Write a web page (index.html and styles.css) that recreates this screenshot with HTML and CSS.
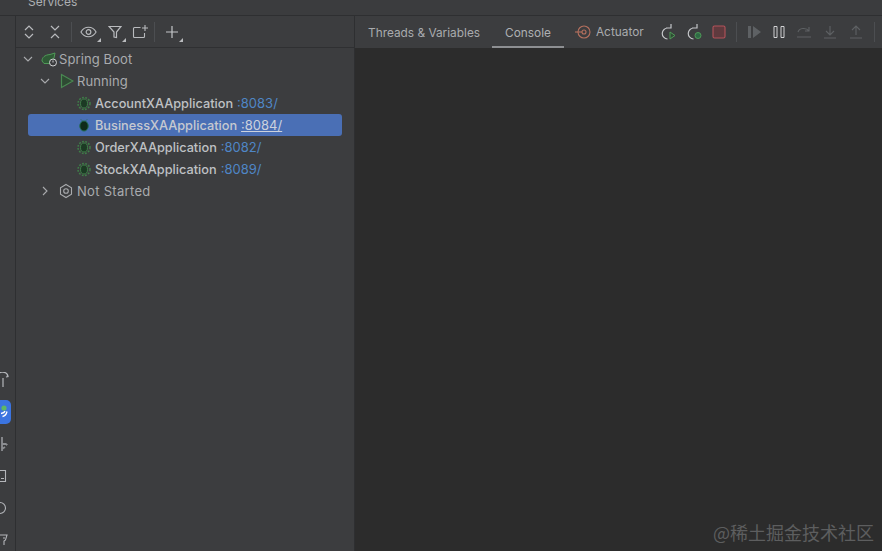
FILE: index.html
```html
<!DOCTYPE html>
<html lang="en">
<head>
<meta charset="utf-8">
<title>Services</title>
<link rel="stylesheet" href="styles.css">
</head>
<body>
<div class="app">
  <div class="titlebar"><span class="title">Services</span></div>
  <div class="main">
    <aside class="strip">
      <svg class="strip-icon" width="15" height="16" viewBox="0 0 15 16"><path d="M-3 5a5 4 0 0 1 11-1M7 2.500l1 2-2 .5M3 6v9" fill="none" stroke="#b4b6ba" stroke-width="1.200"/></svg>
      <div class="strip-active"><svg width="11" height="16" viewBox="0 0 11 16"><path d="M1 9.500c2-.3 3.500-1 4-2.500M2.500 12.500c2.500-.5 4-2.500 4.500-5" fill="none" stroke="#fff" stroke-width="1.300"/><circle cx="4" cy="4" r="2.600" fill="#5fb865"/></svg></div>
      <svg class="strip-icon" width="15" height="16" viewBox="0 0 15 16"><path d="M2 1v14M2 8h4M2 13l3-2" fill="none" stroke="#8c8e92" stroke-width="1.800"/><path d="M6 7l2 1.500L6 10z" fill="#8c8e92"/></svg>
      <svg class="strip-icon" width="15" height="16" viewBox="0 0 15 16"><path d="M-2 2.500h7.500v11H-2M1 10.500h3" fill="none" stroke="#b4b6ba" stroke-width="1.100"/></svg>
      <svg class="strip-icon" width="15" height="16" viewBox="0 0 15 16"><circle cx="0" cy="8" r="5.500" fill="none" stroke="#b4b6ba" stroke-width="1.100"/></svg>
      <svg class="strip-icon" width="15" height="16" viewBox="0 0 15 16"><path d="M-1 3h8l-1.500 5-1.500 1v4M3 6h2" fill="none" stroke="#b4b6ba" stroke-width="1.100"/></svg>
    </aside>
    <section class="side">
      <div class="toolbar">
        <svg class="tool" width="14" height="16" viewBox="0 0 14 16"><path d="M3 6l4-4 4 4M3 10l4 4 4-4" fill="none" stroke="#b9bbbe" stroke-width="1.200"/></svg>
        <svg class="tool tool-b" width="14" height="16" viewBox="0 0 14 16"><path d="M3 2l4 4 4-4M3 14l4-4 4 4" fill="none" stroke="#b9bbbe" stroke-width="1.200"/></svg>
        <span class="sep sep-a"></span>
        <span class="drop"><svg width="17" height="14" viewBox="0 0 18 14"><path d="M1 7c2-3.500 5-5 8-5s6 1.500 8 5c-2 3.500-5 5-8 5s-6-1.500-8-5z" fill="none" stroke="#b9bbbe" stroke-width="1.200"/><circle cx="9" cy="7" r="2.500" fill="none" stroke="#b9bbbe" stroke-width="1.200"/></svg><i class="corner"></i></span>
        <span class="drop drop-filter"><svg width="14" height="14" viewBox="0 0 14 14"><path d="M1 1.500h12L8.500 7v5.500L6 12V7z" fill="none" stroke="#b9bbbe" stroke-width="1.200"/></svg><i class="corner"></i></span>
        <svg class="tool tool-new" width="16" height="16" viewBox="0 0 16 16"><path d="M8.500 3.500H2.500a1 1 0 0 0-1 1v8a1 1 0 0 0 1 1h9a1 1 0 0 0 1-1V9M13 1v6M10 4h6" fill="none" stroke="#b9bbbe" stroke-width="1.100"/></svg>
        <span class="sep sep-b"></span>
        <span class="drop drop-plus"><svg width="14" height="14" viewBox="0 0 14 14"><path d="M7 1v12M1 7h12" fill="none" stroke="#c4c6c9" stroke-width="1.200"/></svg><i class="corner"></i></span>
      </div>
      <ul class="tree">
        <li class="row lvl0">
          <svg class="chev" width="10" height="10" viewBox="0 0 10 10"><path d="M1 3l4 4 4-4" fill="none" stroke="#a9abae" stroke-width="1.100"/></svg>
          <svg class="node boot" width="17" height="16" viewBox="0 0 17 16"><path d="M1 10c0-3.500 2.500-6 8-6.500l5-1.500-1 5-3 5.500H3z" fill="#2f5a36" stroke="#4f9a58" stroke-width="1"/><circle cx="12" cy="11.500" r="3.500" fill="#3c3d3f" stroke="#cfd0d2" stroke-width="1"/><path d="M12 9.500v2" stroke="#cfd0d2"/></svg>
          <span class="label dim">Spring Boot</span>
        </li>
        <li class="row lvl1">
          <svg class="chev" width="10" height="10" viewBox="0 0 10 10"><path d="M1 3l4 4 4-4" fill="none" stroke="#a9abae" stroke-width="1.100"/></svg>
          <svg class="node" width="14" height="16" viewBox="0 0 14 16"><path d="M1.500 1.500v13L13 8z" fill="#2e4a33" stroke="#4a8a52" stroke-width="1.200"/></svg>
          <span class="label dim">Running</span>
        </li>
        <li class="row lvl2">
          <svg class="bug" width="16" height="16" viewBox="0 0 16 16"><circle cx="8" cy="8.500" r="6" fill="none" stroke="#3f7f49" stroke-width="1.500" stroke-dasharray="1.800 1.400"/><ellipse cx="8" cy="8.500" rx="3.500" ry="4.500" fill="#1c3a24" stroke="#3f7f49"/></svg>
          <span class="label strong">AccountXAApplication</span><a class="port">:8083/</a>
        </li>
        <li class="row lvl2 selected">
          <svg class="bug" width="16" height="16" viewBox="0 0 16 16"><ellipse cx="8" cy="9" rx="4.200" ry="5" fill="#0f2b1a" stroke="#1f6a4a"/><path d="M6 3.500l-1-1M10 3.500l1-1" stroke="#1f6a4a"/></svg>
          <span class="label strong">BusinessXAApplication</span><a class="port current">:8084/</a>
        </li>
        <li class="row lvl2">
          <svg class="bug" width="16" height="16" viewBox="0 0 16 16"><circle cx="8" cy="8.500" r="6" fill="none" stroke="#3f7f49" stroke-width="1.500" stroke-dasharray="1.800 1.400"/><ellipse cx="8" cy="8.500" rx="3.500" ry="4.500" fill="#1c3a24" stroke="#3f7f49"/></svg>
          <span class="label strong">OrderXAApplication</span><a class="port">:8082/</a>
        </li>
        <li class="row lvl2">
          <svg class="bug" width="16" height="16" viewBox="0 0 16 16"><circle cx="8" cy="8.500" r="6" fill="none" stroke="#3f7f49" stroke-width="1.500" stroke-dasharray="1.800 1.400"/><ellipse cx="8" cy="8.500" rx="3.500" ry="4.500" fill="#1c3a24" stroke="#3f7f49"/></svg>
          <span class="label strong">StockXAApplication</span><a class="port">:8089/</a>
        </li>
        <li class="row lvl1">
          <svg class="chev" width="10" height="10" viewBox="0 0 10 10"><path d="M3 1l4 4-4 4" fill="none" stroke="#a9abae" stroke-width="1.100"/></svg>
          <svg class="node gear" width="14" height="16" viewBox="0 0 14 16"><path d="M7 1.500l5.500 3.200v6.600L7 14.500l-5.500-3.200V4.700z" fill="none" stroke="#a9abae" stroke-width="1.100"/><circle cx="7" cy="8" r="2.300" fill="none" stroke="#a9abae" stroke-width="1.100"/></svg>
          <span class="label dim wide">Not Started</span>
        </li>
      </ul>
    </section>
    <section class="content">
      <div class="tabs">
        <span class="tab">Threads &amp; Variables</span>
        <span class="tab active">Console</span>
        <span class="tab actuator"><svg width="16" height="16" viewBox="0 0 16 16"><circle cx="9" cy="8" r="6" fill="none" stroke="#b5705e" stroke-width="1.100"/><circle cx="9" cy="8" r="2" fill="none" stroke="#b5705e" stroke-width="1.100"/><path d="M0 8h7" stroke="#b5705e" stroke-width="1.100"/></svg>Actuator</span>
        <div class="actions">
          <svg width="16" height="16" viewBox="0 0 16 16"><path d="M7 3a5.500 5.500 0 1 0-.5 11M5 3h5V-1" transform="translate(1 1)" fill="none" stroke="#c4c6c9" stroke-width="1.200"/><path d="M10 8v7l5-3.500z" fill="#2e4a33" stroke="#4f9a58"/></svg>
          <svg width="16" height="16" viewBox="0 0 16 16"><path d="M7 3a5.500 5.500 0 1 0-.5 11M5 3h5V-1" transform="translate(1 1)" fill="none" stroke="#c4c6c9" stroke-width="1.200"/><circle cx="12" cy="11.500" r="3" fill="#2f6a45" stroke="#4f9a58"/></svg>
          <svg width="14" height="14" viewBox="0 0 14 14"><rect x="1" y="1" width="12" height="12" rx="1.500" fill="#5f3a3e" stroke="#b4525a" stroke-width="1.100"/></svg>
          <span class="sep"></span>
          <svg width="15" height="14" viewBox="0 0 15 14"><path d="M1 1h3v12H1zM6 1l8 6-8 6z" fill="#5e6164"/></svg>
          <svg width="14" height="14" viewBox="0 0 14 14"><path d="M2 1.500h3v11H2zM9 1.500h3v11H9z" fill="none" stroke="#d0d1d3" stroke-width="1"/></svg>
          <svg width="16" height="14" viewBox="0 0 16 14"><path d="M2 7c1-4 8-5 11-1M13 2v4H9M1 12h14" fill="none" stroke="#5e6164" stroke-width="1.100"/></svg>
          <svg width="16" height="14" viewBox="0 0 16 14"><path d="M8 1v8M4 6l4 4 4-4M2 13h12" fill="none" stroke="#5e6164" stroke-width="1.100"/></svg>
          <svg width="16" height="14" viewBox="0 0 16 14"><path d="M8 10V2M4 5l4-4 4 4M2 13h12" fill="none" stroke="#5e6164" stroke-width="1.100"/></svg>
          <span class="sep"></span>
        </div>
      </div>
      <div class="console"><span class="watermark">@稀土掘金技术社区</span></div>
    </section>
  </div>
</div>
</body>
</html>
```
FILE: styles.css
```css
* { box-sizing: border-box; }
html, body { margin: 0; padding: 0; }
body {
  width: 882px;
  height: 551px;
  overflow: hidden;
  background: #3c3d3f;
  font-family: Inter, "Liberation Sans", "Noto Sans CJK SC", sans-serif;
  font-size: 13px;
  color: #b5b7ba;
}
.app { display: flex; flex-direction: column; height: 551px; }
.titlebar {
  height: 16px;
  flex: none;
  overflow: hidden;
  background: #3b3c3e;
  border-bottom: 1px solid #2e2f31;
  padding-left: 28px;
}
.title { display: block; margin-top: -6px; line-height: 16px; font-size: 12px; color: #aeb0b3; }
.main { flex: 1; display: flex; min-height: 0; }
.strip {
  width: 16px;
  flex: none;
  border-right: 1px solid #2e2f31;
  background: #3c3d3f;
  display: flex;
  flex-direction: column;
  padding-top: 356px;
  gap: 16px;
  overflow: hidden;
}
.strip-icon { display: block; flex: none; }
.strip-active {
  width: 11px;
  height: 24px;
  margin: -4px 0;
  flex: none;
  background: #3b74e0;
  border-radius: 0 5px 5px 0;
  padding-top: 4px;
}
.strip-active svg { display: block; }
.side {
  width: 339px;
  flex: none;
  background: #3c3d3f;
  border-right: 1px solid #2e2f31;
  display: flex;
  flex-direction: column;
}
.toolbar {
  height: 32px;
  flex: none;
  border-bottom: 1px solid #2f3032;
  display: flex;
  align-items: center;
  padding-left: 6px;
}
.toolbar svg { display: block; }
.tool-b { margin-left: 12px; }
.sep { width: 1px; height: 20px; background: #4c4e51; flex: none; }
.sep-a { margin: 0 8px 0 9px; }
.drop { position: relative; display: block; }
.corner {
  position: absolute;
  right: -4px;
  bottom: -3px;
  width: 0;
  height: 0;
  border-left: 4px solid transparent;
  border-bottom: 4px solid #b9bbbe;
}
.drop-filter { margin-left: 11px; }
.tool-new { margin-left: 10px; }
.sep-b { margin: 0 10px 0 6px; }
.tree { list-style: none; margin: 0; padding: 0; }
.row {
  height: 22px;
  display: flex;
  align-items: center;
  border-radius: 3px;
  white-space: nowrap;
}
.lvl0 { padding-left: 7px; }
.lvl1 { padding-left: 24px; }
.lvl2 { padding-left: 60px; }
.chev { display: block; flex: none; width: 10px; }
.node { display: block; flex: none; margin-left: 10px; margin-right: 3px; }
.boot { margin-left: 8px; margin-right: 1px; }
.gear { margin-left: 9px; margin-right: 4px; }
.bug { display: block; flex: none; margin-right: 3px; }
.dim { color: #a9abae; letter-spacing: .1px; }
.wide { letter-spacing: .3px; }
.strong { color: #bfc1c4; font-weight: 500; font-size: 12.75px; }
.port { color: #4f86c6; margin-left: 4px; }
.selected { background: #4a6fb5; width: 314px; margin-left: 12px; padding-left: 48px; }
.selected .strong { color: #c6c9d0; }
.current { color: #ccd2de; text-decoration: underline; }
.content { flex: 1; min-width: 0; display: flex; flex-direction: column; }
.tabs {
  height: 32px;
  flex: none;
  background: #3c3d3f;
  display: flex;
  align-items: center;
  padding-left: 13px;
}
.tab { font-size: 11.85px; color: #a9abae; height: 32px; line-height: 34px; white-space: nowrap; }
.tab.active {
  margin-left: 12px;
  padding: 0 13px;
  border-bottom: 2px solid #8d8f92;
  color: #aeb0b3;
}
.actuator { display: flex; align-items: center; gap: 5px; margin-left: 11px; }
.actuator svg { display: block; }
.actions { display: flex; align-items: center; gap: 10px; margin-left: 16px; }
.actions svg { display: block; flex: none; }
.console {
  flex: 1;
  position: relative;
  background: #2c2c2c;
}
.watermark {
  position: absolute;
  right: 8px;
  bottom: 7px;
  font-family: "Noto Sans CJK SC", sans-serif;
  font-size: 18px;
  line-height: 24px;
  color: #5d5e5f;
  white-space: nowrap;
}
```
